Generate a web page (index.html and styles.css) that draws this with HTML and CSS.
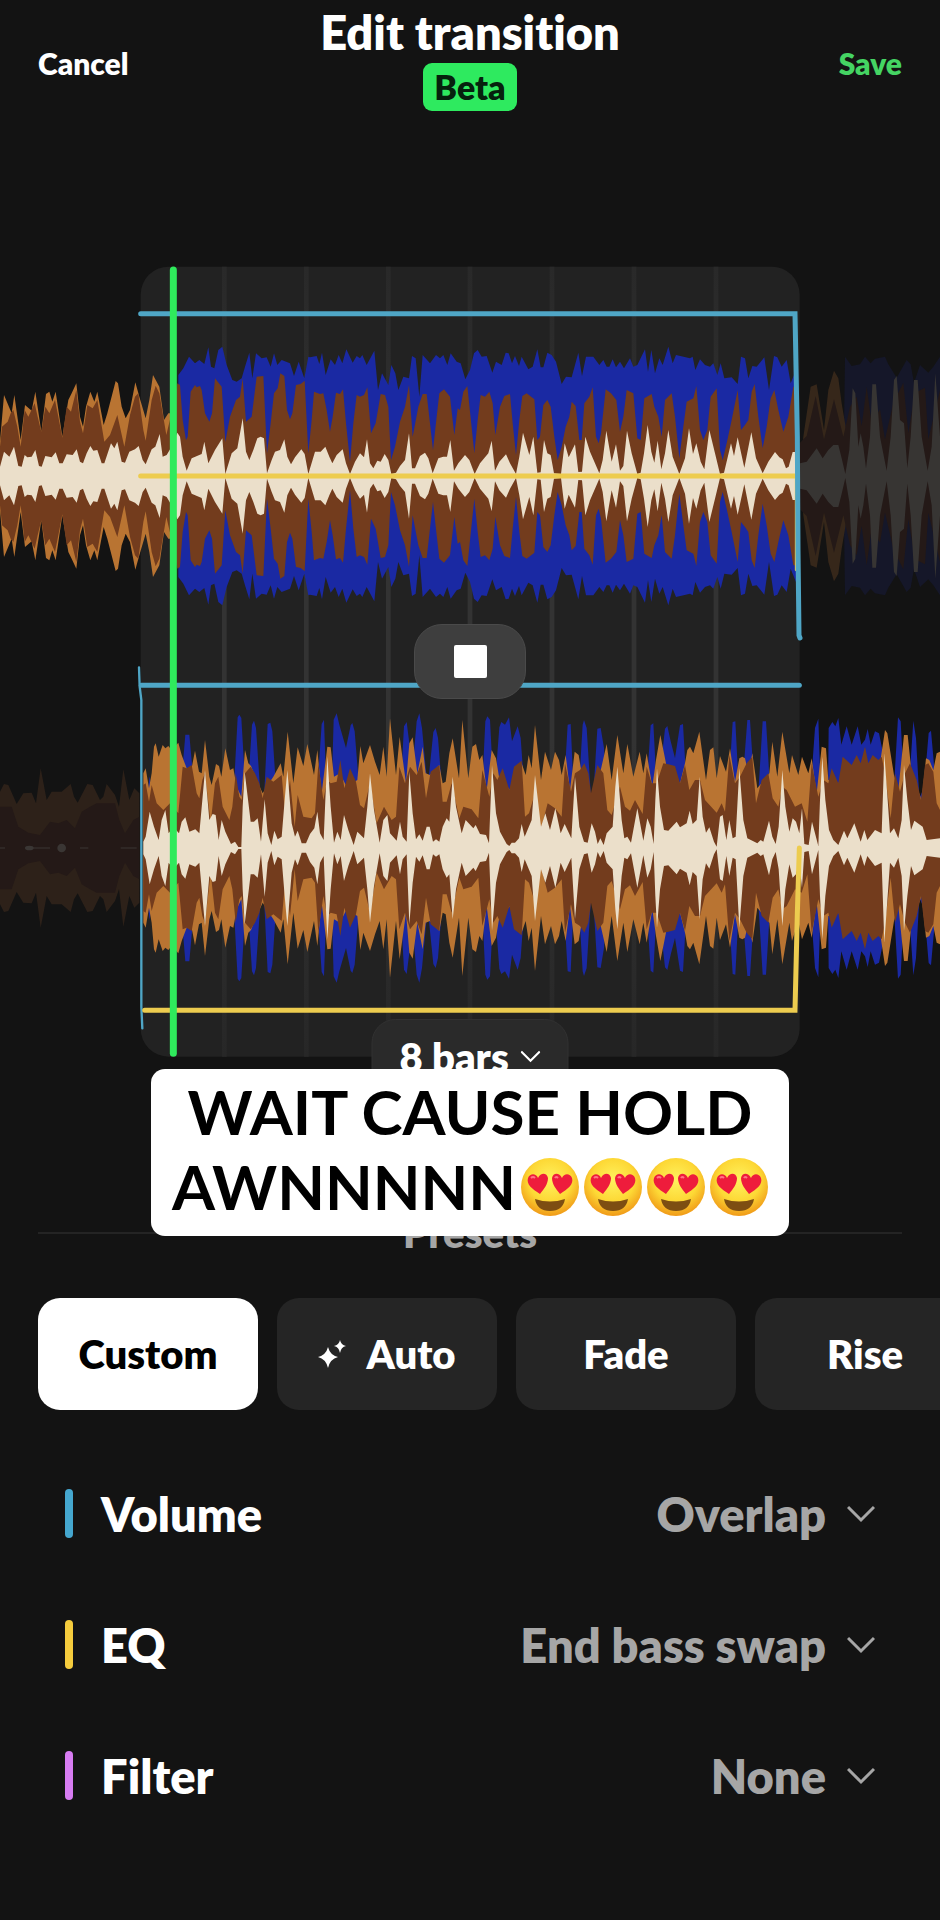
FILE: index.html
```
<!DOCTYPE html>
<html lang="en">
<head>
  <meta charset="UTF-8">
  <meta name="viewport" content="width=device-width, initial-scale=1.0">
  <title>Edit transition</title>
  <link rel="stylesheet" href="styles.css">
</head>
<body>

  <!-- Shared icons -->
  <svg class="sprite" aria-hidden="true">
    <defs>
      <symbol id="chevron" viewBox="0 0 28 18">
        <path d="M1 2 L14 15 L27 2" fill="none" stroke="currentColor" stroke-width="3"/>
      </symbol>
      <radialGradient id="face" cx="50%" cy="38%" r="62%">
        <stop offset="0" stop-color="#fff25e"/>
        <stop offset="0.6" stop-color="#fdd835"/>
        <stop offset="1" stop-color="#f09a18"/>
      </radialGradient>
      <symbol id="heart-eyes" viewBox="0 0 58 58">
        <circle cx="29" cy="29" r="29" fill="url(#face)"/>
        <path d="M14 41 Q29 46 44 41 Q42 53 29 53 Q16 53 14 41 Z" fill="#7d4e12"/>
        <path d="M19 36 C11 31 5 26 7 20 C9 15 15 15 17 20 C20 14 26 15 27 20 C27 26 23 31 19 36 Z" fill="#ee1c3c"/>
        <path d="M39 36 C47 31 53 26 51 20 C49 15 43 15 41 20 C38 14 32 15 31 20 C31 26 35 31 39 36 Z" fill="#ee1c3c"/>
        <path d="M10 20 Q12 18 14 20 M34 20 Q35 18 37 20" fill="none" stroke="#ff7484" stroke-width="2"/>
      </symbol>
    </defs>
  </svg>

  <header class="topbar">
    <button class="topbar-btn" type="button">Cancel</button>
    <div class="topbar-title">
      <h1>Edit transition</h1>
      <span class="badge">Beta</span>
    </div>
    <button class="topbar-btn save" type="button">Save</button>
  </header>

  <main>
    <section class="timeline">
      <svg class="waves" viewBox="0 0 2820 2430" role="img" aria-label="Waveforms of both tracks">
        <defs>
          <linearGradient id="gridFade" gradientUnits="userSpaceOnUse" x1="0" y1="50" x2="0" y2="2420">
            <stop offset="0" stop-color="#292929"/>
            <stop offset="0.4" stop-color="#333333"/>
            <stop offset="0.6" stop-color="#333333"/>
            <stop offset="1" stop-color="#272727"/>
          </linearGradient>

          <!-- Lower half of each track, mirrored below for the upper half -->
          <g id="outgoing">
            <path class="blue" d="M535 0 L535 303 550 323 567 358 585 338 598 348 613 336 625 386 633 328 643 323 655 378 667 388 680 333 697 288 710 283 725 293 735 328 748 370 757 293 768 368 785 353 800 356 812 328 822 368 832 333 845 348 870 338 882 300 896 343 913 293 925 358 930 356 950 360 958 336 966 370 977 303 992 350 1005 333 1016 363 1027 338 1039 380 1058 340 1070 360 1080 353 1087 363 1100 333 1123 376 1134 258 1146 308 1165 273 1174 333 1186 308 1195 258 1210 298 1227 293 1236 360 1247 353 1258 238 1268 363 1290 338 1308 363 1320 353 1330 363 1342 333 1352 368 1370 343 1382 338 1396 290 1410 318 1422 368 1433 378 1445 358 1460 360 1477 310 1488 343 1505 333 1517 370 1526 368 1536 338 1545 360 1557 330 1565 358 1585 320 1598 328 1612 380 1622 326 1630 326 1642 370 1655 363 1668 343 1685 276 1698 298 1715 296 1735 370 1746 300 1758 358 1780 358 1798 333 1810 348 1820 328 1828 328 1838 350 1848 326 1860 343 1872 323 1890 353 1900 328 1912 333 1935 380 1944 313 1954 378 1965 308 1978 353 1988 333 2005 388 2018 338 2028 363 2070 353 2078 358 2086 318 2100 350 2115 333 2130 328 2140 338 2152 303 2162 338 2173 293 2195 296 2213 276 2223 358 2235 353 2245 293 2257 330 2270 328 2293 356 2307 258 2322 360 2332 356 2345 328 2360 348 2372 278 2388 318 V0 Z"/>
            <path class="orange" d="M0 0 V103 L12 243 35 188 43 243 62 108 75 213 95 196 106 253 124 133 138 246 148 253 157 223 167 253 187 118 205 228 215 248 229 278 240 178 249 148 258 208 271 253 283 223 292 253 311 153 322 188 347 285 354 278 365 208 377 173 390 198 406 281 418 238 437 173 448 228 459 303 478 268 492 168 505 188 530 188 V0 Z"/>
            <path class="brown" d="M0 0 V88 L6 148 23 163 32 188 40 198 52 148 62 88 74 198 85 178 104 218 113 178 124 133 136 208 148 188 165 228 175 178 187 115 200 208 213 193 229 258 240 163 249 128 262 213 278 203 292 228 313 103 330 123 352 183 373 88 390 183 405 238 415 248 430 138 437 106 455 228 467 271 478 248 499 123 512 178 532 278 540 273 548 168 558 108 563 118 572 253 585 273 590 266 600 270 605 258 615 188 628 163 636 188 645 293 665 268 676 103 690 178 708 228 720 238 728 293 738 163 755 178 770 298 790 300 801 68 812 158 822 248 833 263 841 308 853 300 861 198 870 170 877 188 888 273 902 276 914 286 925 68 935 168 942 253 960 246 970 248 980 198 990 133 998 178 1008 250 1020 246 1029 260 1038 158 1050 43 1060 158 1070 243 1080 238 1092 243 1102 266 1113 128 1127 158 1142 246 1155 243 1165 208 1173 48 1185 88 1200 163 1215 208 1227 273 1238 118 1255 208 1268 246 1280 246 1299 78 1310 178 1318 248 1332 260 1350 238 1363 123 1373 203 1380 198 1390 253 1402 270 1423 68 1433 168 1442 243 1455 238 1468 253 1478 218 1486 123 1500 208 1513 240 1530 246 1538 158 1548 63 1558 168 1567 240 1580 248 1603 230 1612 108 1620 118 1630 213 1642 228 1652 208 1663 118 1673 48 1685 88 1697 148 1708 178 1715 223 1727 210 1738 108 1745 108 1753 218 1768 238 1778 266 1788 118 1796 98 1803 128 1817 260 1833 248 1849 228 1860 133 1870 178 1880 258 1900 248 1912 113 1922 108 1933 233 1955 246 1963 208 1975 178 1985 118 1995 228 2015 248 2025 178 2038 53 2050 148 2060 223 2080 233 2089 270 2100 138 2110 108 2122 138 2132 238 2150 263 2160 78 2168 48 2180 98 2195 168 2213 258 2223 138 2235 153 2245 168 2255 253 2264 276 2275 178 2288 83 2300 148 2312 233 2323 258 2335 198 2350 133 2365 178 2380 268 2390 268 V0 Z"/>
            <path class="cream" d="M0 0 V28 L12 73 28 58 42 88 55 30 65 28 74 63 82 56 95 58 106 78 117 30 125 28 136 60 155 56 167 71 178 38 188 38 200 65 218 63 230 80 240 43 249 38 260 68 271 90 280 76 292 78 305 38 313 38 323 68 333 98 343 83 352 103 365 43 375 40 388 73 405 80 416 90 428 48 437 35 455 80 466 88 479 126 488 58 500 63 512 83 532 130 540 118 548 58 560 16 575 53 605 66 613 103 625 38 645 78 667 113 676 6 695 68 712 83 728 173 738 73 748 48 760 78 772 113 782 118 792 113 801 8 815 48 825 73 840 78 853 110 862 58 873 35 885 56 904 80 914 66 925 6 945 73 962 73 976 88 988 58 997 38 1010 63 1028 80 1038 38 1050 6 1065 43 1080 68 1092 56 1101 110 1110 38 1120 23 1132 46 1142 43 1154 66 1165 48 1174 6 1188 10 1200 30 1215 48 1227 128 1236 23 1245 23 1260 60 1275 70 1285 53 1298 8 1315 53 1330 58 1341 58 1351 108 1362 16 1375 38 1395 63 1408 48 1424 6 1440 38 1465 68 1475 106 1485 16 1498 43 1518 65 1530 38 1548 6 1558 58 1569 130 1588 63 1600 118 1612 10 1622 11 1632 108 1642 68 1652 63 1662 8 1683 6 1694 98 1706 56 1725 95 1735 12 1746 13 1756 118 1770 73 1798 8 1808 48 1819 136 1835 43 1848 95 1860 16 1870 30 1881 136 1895 68 1912 6 1922 10 1932 68 1943 153 1954 73 1963 40 1973 106 1984 20 1995 68 2005 138 2018 58 2038 6 2055 53 2067 143 2079 66 2089 98 2102 43 2113 20 2128 138 2145 68 2160 6 2172 10 2193 98 2202 60 2213 116 2233 25 2254 131 2268 53 2288 8 2305 43 2325 72 2338 56 2348 50 2358 23 2366 28 2378 72 2390 72 V0 Z"/>
            <path class="dim-blue" d="M2530 0 L2535 358 2555 330 2580 335 2595 358 2612 338 2625 352 2655 358 2665 335 2690 295 2720 348 2732 335 2742 280 2760 333 2785 310 2800 328 2820 358 V0 Z"/>
            <path class="dim-orange" d="M2400 0 L2410 118 2432 268 2450 275 2472 138 2485 258 2502 316 2515 293 2525 218 2545 100 V0 Z"/>
            <path class="dim-brown" d="M2400 0 V100 L2420 120 2447 240 2472 110 2502 230 2530 118 2550 208 2570 238 2585 150 2600 268 2615 158 2640 200 2655 110 2680 220 2710 280 2725 130 2745 250 2775 265 2785 110 2820 258 V0 Z"/>
            <path class="dim-gray" d="M2400 0 V38 L2420 43 2450 83 2468 53 2485 78 2500 93 2515 93 2525 53 2536 6 2548 78 2558 263 2566 248 2575 88 2582 128 2590 88 2598 23 2610 118 2617 275 2628 275 2640 118 2660 16 2672 118 2682 288 2690 300 2700 168 2712 158 2722 23 2732 118 2742 288 2753 288 2765 118 2783 16 2795 88 2806 308 2820 118 V0 Z"/>
          </g>

          <g id="incoming">
            <path class="dim-orange-flat" d="M0 0 V169 L12 192 25 189 50 132 70 164 95 166 108 134 122 239 140 144 155 169 185 169 212 192 222 154 233 136 262 192 278 189 300 144 310 154 320 192 345 159 357 124 370 236 388 144 403 179 418 164 V0 Z"/>
            <path class="dim-brown" d="M0 0 V124 H35 L55 64 85 46 120 39 150 79 175 74 200 84 225 59 245 109 270 124 290 134 345 134 358 84 375 44 400 84 418 94 V0 Z"/>
            <path class="blue" d="M435 0 L440 150 449 215 458 150 540 150 556 340 568 340 585 150 700 150 713 392 718 400 724 390 738 150 742 150 756 370 762 382 768 360 782 150 792 150 803 372 811 376 817 350 830 150 950 150 965 372 972 385 980 150 996 210 1001 385 1010 404 1018 370 1038 300 1052 368 1057 375 1064 350 1080 150 1200 150 1212 365 1220 378 1226 330 1238 240 1250 380 1258 404 1266 360 1278 230 1285 200 1300 348 1307 360 1314 330 1328 150 1445 150 1456 380 1462 395 1470 385 1482 150 1498 362 1504 378 1515 370 1527 392 1536 320 1553 365 1562 330 1575 150 1690 150 1703 370 1712 372 1722 150 1738 200 1748 370 1752 384 1760 360 1773 150 1780 160 1792 358 1802 360 1812 300 1822 150 1938 150 1952 368 1960 374 1970 180 1984 260 1995 358 2002 366 2012 320 2025 270 2040 368 2049 372 2060 180 2184 150 2198 378 2206 380 2218 150 2228 200 2242 384 2250 384 2262 200 2274 150 2288 380 2298 380 2312 150 2430 150 2445 360 2455 388 2462 180 2484 180 2486 360 2497 378 2506 365 2515 390 2524 310 2540 365 2555 310 2573 365 2584 310 2595 325 2603 357 2612 310 2625 350 2637 344 2646 300 2650 150 2680 150 2694 392 2702 380 2714 150 2728 200 2740 382 2748 330 2758 150 2772 180 2786 345 2793 352 2802 250 2810 150 V0 Z"/>
            <path class="orange" d="M430 0 V224 L437 239 447 179 455 224 462 304 467 314 476 274 488 309 496 299 505 306 515 294 535 316 545 279 560 239 575 240 585 292 597 229 605 224 615 324 628 214 635 189 648 252 657 246 664 214 676 299 690 234 700 239 710 184 724 154 735 294 745 254 753 246 770 204 788 164 800 184 820 214 842 254 850 214 863 349 880 194 893 302 910 246 922 312 942 219 952 294 965 164 982 304 992 302 1002 214 1020 224 1040 184 1072 204 1081 306 1090 254 1110 309 1125 259 1139 219 1150 304 1160 214 1170 389 1188 219 1199 334 1218 194 1228 314 1238 332 1252 224 1268 304 1277 224 1290 219 1318 249 1328 194 1337 199 1348 284 1358 329 1377 209 1387 384 1405 209 1417 304 1428 312 1438 264 1447 279 1460 174 1475 294 1488 269 1497 214 1530 174 1565 254 1577 219 1586 279 1595 239 1605 369 1623 204 1635 289 1653 234 1665 289 1677 264 1685 219 1697 279 1710 174 1724 289 1736 279 1745 224 1773 144 1800 224 1820 312 1835 204 1852 339 1870 224 1882 312 1900 214 1919 289 1930 224 1940 284 1957 184 1968 264 1981 339 1992 284 2000 244 2040 194 2055 254 2062 294 2070 304 2080 284 2098 349 2118 204 2130 294 2140 302 2150 209 2160 276 2178 229 2190 299 2205 199 2218 269 2227 274 2235 269 2245 224 2257 284 2272 179 2308 224 2317 319 2332 214 2347 349 2368 224 2376 279 2395 219 2406 274 2425 224 2435 269 2450 164 2465 304 2478 299 2485 204 2515 194 2550 240 2640 254 2655 354 2662 344 2682 219 2695 174 2712 339 2723 339 2735 224 2765 144 2778 269 2788 264 2800 234 2810 284 2820 289 V0 Z"/>
            <path class="brown" d="M430 0 V189 L437 194 447 139 455 189 470 134 490 114 510 134 535 104 548 244 560 239 575 249 590 164 598 149 607 204 615 224 632 74 645 194 655 214 668 124 688 84 697 124 707 224 718 154 725 144 735 224 752 244 765 224 778 194 788 149 800 214 820 199 845 219 855 104 870 204 884 64 893 159 910 94 935 89 945 104 955 254 970 144 982 204 992 194 1010 199 1021 264 1033 179 1050 239 1068 199 1080 129 1092 119 1110 194 1130 74 1152 124 1175 84 1188 94 1198 244 1215 194 1230 244 1250 219 1265 259 1278 149 1292 229 1318 249 1328 139 1340 139 1355 194 1378 89 1390 124 1415 116 1435 89 1447 234 1468 154 1480 224 1492 204 1508 239 1528 174 1542 244 1565 262 1575 94 1587 104 1605 164 1622 54 1643 134 1665 119 1685 94 1695 254 1713 169 1725 224 1740 234 1753 254 1765 224 1773 164 1792 249 1810 224 1822 114 1835 99 1860 184 1875 124 1890 112 1905 144 1928 102 1940 244 1955 194 1970 194 1990 254 2005 251 2025 246 2040 194 2055 249 2068 174 2085 204 2100 204 2115 144 2150 106 2165 134 2175 109 2188 279 2205 194 2220 214 2240 254 2257 274 2268 134 2285 204 2305 224 2318 149 2335 124 2347 184 2360 174 2385 124 2405 134 2422 79 2435 254 2455 154 2470 204 2485 194 2495 239 2515 194 2528 274 2555 249 2570 279 2582 254 2595 304 2605 254 2618 279 2635 264 2645 274 2655 224 2672 89 2685 224 2700 169 2715 224 2730 254 2750 204 2763 144 2775 249 2785 254 2800 229 2810 134 2820 114 V0 Z"/>
            <path class="cream" d="M430 0 V19 L437 34 449 109 462 64 476 24 485 84 496 114 506 44 520 64 537 44 545 79 556 92 568 49 586 56 598 44 607 144 615 234 628 84 638 102 647 99 656 24 665 84 676 49 693 12 705 19 715 3 724 3 728 124 734 229 752 79 762 79 773 89 783 19 794 146 803 44 814 9 823 52 833 26 845 34 854 144 862 234 875 74 885 34 893 52 905 14 918 14 930 42 943 59 952 109 960 44 971 24 976 144 982 274 992 124 1002 16 1012 49 1022 24 1032 99 1045 54 1061 9 1072 49 1092 29 1102 124 1110 224 1122 114 1139 16 1150 84 1162 99 1170 44 1190 22 1200 79 1208 34 1220 19 1228 229 1238 104 1248 26 1258 41 1268 22 1280 64 1289 64 1299 19 1308 26 1318 19 1328 64 1340 89 1348 79 1358 214 1368 124 1385 44 1397 84 1420 59 1427 69 1440 42 1458 39 1467 14 1476 249 1488 104 1500 49 1520 12 1528 6 1535 16 1545 16 1557 29 1565 72 1574 34 1595 84 1605 219 1623 64 1636 104 1650 54 1666 119 1682 44 1694 72 1714 29 1725 214 1738 64 1752 19 1763 16 1775 74 1785 49 1793 12 1801 29 1811 9 1820 44 1838 64 1846 184 1852 244 1865 84 1873 29 1882 34 1893 16 1912 119 1930 22 1942 89 1952 64 1961 12 1966 144 1971 239 1980 124 1992 54 2005 52 2030 79 2040 62 2060 74 2069 112 2078 72 2090 84 2099 214 2108 94 2118 46 2128 62 2142 19 2150 4 2160 94 2168 99 2179 24 2188 84 2198 29 2207 34 2218 239 2230 84 2242 29 2272 14 2282 24 2290 19 2307 82 2317 34 2327 12 2336 64 2347 234 2356 124 2368 49 2378 89 2388 79 2398 44 2406 119 2413 12 2426 9 2436 79 2455 6 2460 144 2467 274 2476 144 2487 54 2500 24 2515 9 2532 52 2542 29 2563 74 2582 19 2593 54 2602 24 2625 54 2645 44 2653 284 2663 144 2670 44 2682 59 2695 29 2705 84 2712 249 2722 144 2733 54 2743 82 2768 64 2780 24 2820 29 V0 Z"/>
          </g>
        </defs>

        <!-- Transition window with bar lines -->
        <rect x="422" y="50" width="1977" height="2370" rx="84" fill="#222222"/>
        <path d="M673 50 V2420 M919 50 V2420 M1165 50 V2420 M1410 50 V2420 M1656 50 V2420 M1902 50 V2420 M2148 50 V2420" stroke="url(#gridFade)" stroke-width="14" fill="none"/>

        <g transform="translate(0 678)">
          <use href="#outgoing"/>
          <use href="#outgoing" transform="scale(1 -1)"/>
        </g>
        <g transform="translate(0 1794)">
          <use href="#incoming"/>
          <use href="#incoming" transform="scale(1 -1)"/>
          <path d="M0 0 H15 M75 0 H150 M240 0 H265 M362 0 H410" stroke="#332d2b" stroke-width="4"/>
          <ellipse cx="88" cy="0" rx="13" ry="7" fill="#3a3634"/>
          <circle cx="185" cy="0" r="13" fill="#3a3634"/>
        </g>

        <!-- Automation curves -->
        <path class="curve yellow" d="M422 678 H2385"/>
        <path class="curve yellow thin" d="M2388 678 V960"/>
        <path class="curve cyan" d="M422 191 H2385 L2392 560 2394 900 2397 1156 2400 1164"/>
        <path class="curve cyan" d="M424 1306 H2398"/>
        <path class="curve cyan thin" d="M417 1252 L419 1310 424 1350 V2270 L427 2335"/>
        <path class="curve yellow" d="M434 2281 H2385 L2392 1990 2398 1794"/>
        <path d="M520 60 V2410" stroke="#2fea5c" stroke-width="21" stroke-linecap="round"/>
      </svg>

      <button class="stop" type="button" aria-label="Stop"><span class="stop-icon"></span></button>

      <div class="length">
        <select class="length-select" aria-label="Transition length">
          <option>8 bars</option>
        </select>
        <svg class="length-chevron" aria-hidden="true"><use href="#chevron"/></svg>
      </div>

      <p class="caption">
        WAIT CAUSE HOLD<br>
        <span class="caption-line">AWNNNNN<svg class="emoji" role="img" aria-label="Heart eyes"><use href="#heart-eyes"/></svg><svg class="emoji" role="img" aria-label="Heart eyes"><use href="#heart-eyes"/></svg><svg class="emoji" role="img" aria-label="Heart eyes"><use href="#heart-eyes"/></svg><svg class="emoji" role="img" aria-label="Heart eyes"><use href="#heart-eyes"/></svg></span>
      </p>
    </section>

    <section class="presets">
      <h2><span>Presets</span></h2>
      <div class="preset-list">
        <button class="preset active" type="button">Custom</button>
        <button class="preset" type="button">
          <svg class="sparkle" viewBox="0 0 28 28" aria-hidden="true">
            <path fill="#ffffff" d="M10 7 Q12 15 20 17 Q12 19 10 28 Q8 19 0 17 Q8 15 10 7 Z M22 0 Q23 5 28 6 Q23 7 22 13 Q21 7 16 6 Q21 5 22 0 Z"/>
          </svg>
          Auto
        </button>
        <button class="preset" type="button">Fade</button>
        <button class="preset" type="button">Rise</button>
      </div>
    </section>

    <section class="settings">
      <div class="setting">
        <span class="marker volume"></span>
        <label for="volume">Volume</label>
        <select id="volume"><option>Overlap</option></select>
        <svg class="chevron" aria-hidden="true"><use href="#chevron"/></svg>
      </div>
      <div class="setting">
        <span class="marker eq"></span>
        <label for="eq">EQ</label>
        <select id="eq"><option>End bass swap</option></select>
        <svg class="chevron" aria-hidden="true"><use href="#chevron"/></svg>
      </div>
      <div class="setting">
        <span class="marker filter"></span>
        <label for="filter">Filter</label>
        <select id="filter"><option>None</option></select>
        <svg class="chevron" aria-hidden="true"><use href="#chevron"/></svg>
      </div>
    </section>
  </main>

</body>
</html>
```

FILE: styles.css
```
* {
  box-sizing: border-box;
}

body {
  margin: 0;
  background-color: #131313;
  color: #ffffff;
  font-family: Lato, "Noto Sans", sans-serif;
  font-weight: 800;
  font-variant-ligatures: none;
  overflow-x: hidden;
}

h1, h2, p {
  margin: 0;
  font-weight: inherit;
}

button, select {
  border: none;
  margin: 0;
  padding: 0;
  background: none;
  color: inherit;
  font: inherit;
  appearance: none;
}

.sprite {
  position: absolute;
  width: 0;
  height: 0;
}

/* Header */
.topbar {
  display: grid;
  grid-template-columns: 1fr auto 1fr;
  align-items: center;
  padding: 4px 38px 0;
}

.topbar-title {
  display: flex;
  flex-direction: column;
  align-items: center;
  gap: 3px;
}

h1 {
  font-size: 47px;
  line-height: 56px;
}

.badge {
  padding: 0 11px;
  border-radius: 9px;
  background-color: #2eea5f;
  color: #06210d;
  font-size: 34px;
  line-height: 48px;
}

.topbar-btn {
  justify-self: start;
  padding-top: 10px;
  font-size: 30px;
  line-height: 36px;
}

.topbar-btn.save {
  justify-self: end;
  color: #45d463;
}

/* Timeline */
.timeline {
  position: relative;
  margin-top: 139px;
}

.waves {
  display: block;
  width: 100%;
}

.blue { fill: #1a29a3; }
.orange { fill: #b97432; }
.brown { fill: #733c1d; }
.cream { fill: #ebdfca; }
.dim-blue { fill: #151729; }
.dim-orange { fill: #36271a; }
.dim-orange-flat { fill: #2d2119; }
.dim-brown { fill: #241917; }
.dim-gray { fill: #373533; }

.curve {
  fill: none;
  stroke-width: 15;
  stroke-linecap: round;
}

.curve.thin {
  stroke-width: 7;
}

.cyan { stroke: #4fa6c6; }
.yellow { stroke: #edcc4f; }

.stop {
  position: absolute;
  top: 374px;
  left: 50%;
  display: flex;
  align-items: center;
  justify-content: center;
  width: 112px;
  height: 75px;
  transform: translateX(-50%);
  border: 1px solid #4a4a4a;
  border-radius: 28px;
  background-color: #3e3e3e;
}

.stop-icon {
  width: 33px;
  height: 33px;
  border-radius: 2px;
  background-color: #ffffff;
}

.length {
  position: absolute;
  bottom: -34px;
  left: 50%;
  display: flex;
  align-items: center;
  justify-content: center;
  gap: 11px;
  width: 197px;
  height: 75px;
  transform: translateX(-50%);
  border: 1px solid #313131;
  border-radius: 24px;
  background-color: #2a2a2a;
}

.length-select {
  font-size: 40px;
  line-height: 48px;
}

.length-chevron {
  width: 20px;
  height: 13px;
}

.caption {
  position: absolute;
  top: 100%;
  left: 50%;
  width: 638px;
  margin-top: 9px;
  padding: 5px 0 12px;
  transform: translateX(-50%);
  border-radius: 14px;
  background-color: #ffffff;
  color: #000000;
  font-size: 62px;
  font-weight: 700;
  line-height: 75px;
  text-align: center;
  white-space: nowrap;
}

.caption-line {
  display: flex;
  align-items: center;
  justify-content: center;
  gap: 5px;
}

.emoji {
  width: 58px;
  height: 58px;
}

/* Presets */
.presets {
  margin-top: 149px;
}

h2 {
  display: flex;
  align-items: center;
  margin: 0 38px;
  color: #a6a6a6;
  font-size: 40px;
  line-height: 48px;
}

h2::before, h2::after {
  content: "";
  flex: 1;
  height: 2px;
  background-color: #242424;
}

h2 span {
  padding: 0 16px;
}

.preset-list {
  display: flex;
  gap: 19px;
  margin-top: 41px;
  padding-left: 38px;
  overflow: hidden;
}

.preset {
  display: flex;
  flex: 0 0 220px;
  align-items: center;
  justify-content: center;
  gap: 20px;
  height: 112px;
  border-radius: 22px;
  background-color: #252525;
  font-size: 40px;
  line-height: 48px;
}

.preset.active {
  background-color: #ffffff;
  color: #000000;
}

.sparkle {
  width: 28px;
  height: 28px;
}

/* Settings */
.settings {
  margin-top: 38px;
  padding: 0 65px;
}

.setting {
  display: flex;
  align-items: center;
  height: 131px;
  font-size: 47px;
  line-height: 56px;
}

.marker {
  width: 8px;
  height: 49px;
  margin-right: 28px;
  border-radius: 4px;
}

.marker.volume { background-color: #45a7cf; }
.marker.eq { background-color: #f5cc3d; }
.marker.filter { background-color: #d77cf2; }

.setting select {
  flex: 1;
  color: #a6a6a6;
  text-align-last: right;
}

.chevron {
  width: 28px;
  height: 18px;
  margin-left: 21px;
  color: #a6a6a6;
}
```
